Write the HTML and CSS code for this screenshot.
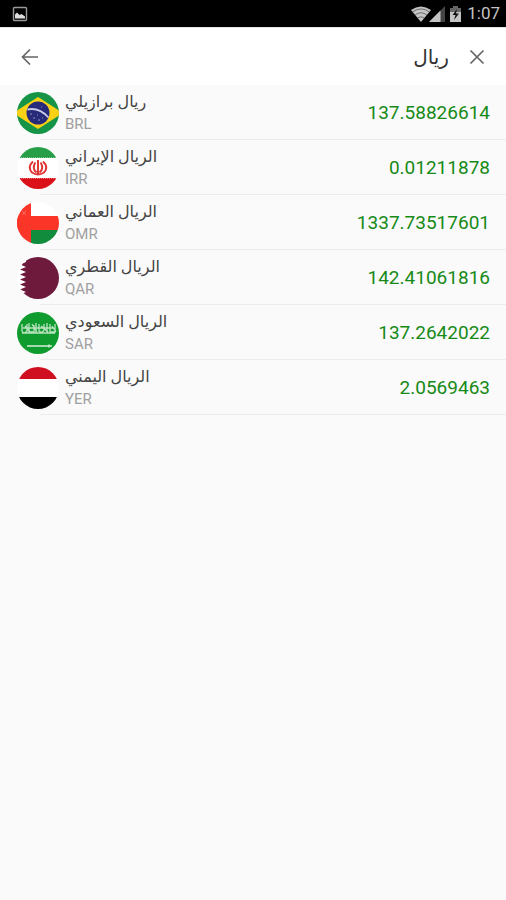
FILE: index.html
```
<!DOCTYPE html>
<html lang="ar">
  <head>
    <meta charset="UTF-8" />
    <meta name="viewport" content="width=device-width, initial-scale=1.0" />
    <title>ريال</title>
    <link rel="stylesheet" href="styles.css">
  </head>
  <body>
    <div class="status-bar">
      <svg class="picture-icon" width="16" height="16" viewBox="0 0 16 16">
        <rect x="1.5" y="1.5" width="13" height="13" rx="1" fill="none" stroke="#999" stroke-width="1.4" />
        <path d="M3 12.5V8.5L5 6.5L7.5 9L9.5 8L13 10.5V12.5Z" fill="#ddd" />
      </svg>
      <div class="status-right">
        <svg width="51" height="18" viewBox="0 0 51 18">
          <path d="M0 5Q10 -2 20 5L10 17Z" fill="#c4c4c4" />
          <path d="M1.5 7Q10 .8 18.5 7M4 10Q10 5.500 16 10M6.500 13Q10 10.500 13.500 13" fill="none" stroke="#555" stroke-width=".8" />
          <path d="M34 1V17H18Z" fill="#444" />
          <path d="M29.500 5.500V17H18Z" fill="#c4c4c4" />
          <path d="M42 1H47V3H50V17H39V3H42Z" fill="#666" />
          <path d="M39 7H50V17H39Z" fill="#c4c4c4" />
          <path d="M46 4L41.500 10H44.500L43 15L48 8.500H45Z" fill="#111" />
        </svg>
        <span class="clock">1:07</span>
      </div>
    </div>

    <header class="search-bar">
      <button class="icon-btn" type="button" aria-label="رجوع">
        <svg width="18" height="18" viewBox="0 0 18 18">
          <path d="M17 9H2M9 1.500L1.500 9L9 16.500" />
        </svg>
      </button>
      <input class="search-input" type="text" dir="rtl" value="ريال" aria-label="بحث" />
      <button class="icon-btn" type="button" aria-label="مسح">
        <svg width="16" height="16" viewBox="0 0 16 16">
          <path d="M1.500 1.500L14.500 14.500M14.500 1.500L1.500 14.500" />
        </svg>
      </button>
    </header>

    <ul class="currency-list">
      <li>
        <svg class="flag" viewBox="0 0 42 42">
          <rect width="42" height="42" fill="#159447" />
          <path d="M21 5L46 21L21 37L-4 21Z" fill="#fbd116" />
          <circle cx="21" cy="21" r="11.500" fill="#262a78" />
          <path d="M10.500 17.500Q22 15 31.500 25.500" fill="none" stroke="#c9cbea" stroke-width="1.800" />
          <path d="M13 22H15M16 26H18M20 23H21M21 28H23M25 26H26M24 15H25" stroke="#8d90c5" />
        </svg>
        <div class="name"><span dir="rtl">ريال برازيلي</span><small>BRL</small></div>
        <span class="rate">137.58826614</span>
      </li>
      <li>
        <svg class="flag" viewBox="0 0 42 42">
          <rect width="42" height="42" fill="#fff" />
          <rect width="42" height="11" fill="#269f48" />
          <rect y="31" width="42" height="11" fill="#da1119" />
          <path d="M0 10.500H42M0 31.500H42" stroke="#fff" stroke-dasharray="1 1" opacity=".4" />
          <path d="M21 13V28M16 14.500Q10 20 15 25.500Q18 27.500 21 27.500Q24 27.500 27 25.500Q32 20 26 14.500M18.500 15.500Q14.500 21 19.500 25.500M23.500 15.500Q27.500 21 22.500 25.500" fill="none" stroke="#e03030" stroke-width="1.900" />
        </svg>
        <div class="name"><span dir="rtl">الريال الإيراني</span><small>IRR</small></div>
        <span class="rate">0.01211878</span>
      </li>
      <li>
        <svg class="flag" viewBox="0 0 42 42">
          <rect width="42" height="42" fill="#fff" />
          <rect width="14" height="42" fill="#fb3527" />
          <rect y="14" width="42" height="14" fill="#fb3527" />
          <rect x="14" y="28" width="28" height="14" fill="#118b3c" />
          <path d="M5 9L9 13M9 9L5 13" stroke="#fd6b60" />
        </svg>
        <div class="name"><span dir="rtl">الريال العماني</span><small>OMR</small></div>
        <span class="rate">1337.73517601</span>
      </li>
      <li>
        <svg class="flag" viewBox="0 0 42 42">
          <rect width="42" height="42" fill="#fff" />
          <path d="M42 0H9V5L3 7.500L9 10L3 12.500L9 15L3 17.500L9 20L3 22.500L9 25L3 27.500L9 30L3 32.500L9 35L3 37.500L9 40V42H42Z" fill="#6e1a3d" />
        </svg>
        <div class="name"><span dir="rtl">الريال القطري</span><small>QAR</small></div>
        <span class="rate">142.41061816</span>
      </li>
      <li>
        <svg class="flag" viewBox="0 0 42 42">
          <rect width="42" height="42" fill="#0f9b2d" />
          <path d="M5 12V19Q7 23 10 19V12M8 14L14 21M12 11V20H17V13M15 12L20 20M19 11V21M22 12V19Q25 22 27 18V12M24 14L31 20M30 11V20M33 12V20H38V12M35 14L39 20M5 21H38M6 16H37" fill="none" stroke="#b9e3c0" stroke-width="1.300" />
          <path d="M10 34H35M32 32.500V35.500" stroke="#d5eed9" stroke-width="1.400" />
        </svg>
        <div class="name"><span dir="rtl">الريال السعودي</span><small>SAR</small></div>
        <span class="rate">137.2642022</span>
      </li>
      <li>
        <svg class="flag" viewBox="0 0 42 42">
          <rect width="42" height="42" fill="#fff" />
          <rect width="42" height="12" fill="#d00f21" />
          <rect y="30" width="42" height="12" fill="#000" />
        </svg>
        <div class="name"><span dir="rtl">الريال اليمني</span><small>YER</small></div>
        <span class="rate">2.0569463</span>
      </li>
    </ul>
  </body>
</html>
```
FILE: styles.css
```
* {
  margin: 0;
  padding: 0;
  box-sizing: border-box;
}

body {
  min-height: 100vh;
  background: #fafafa;
  font-family: Roboto, "DejaVu Sans", sans-serif;
}

.status-bar {
  display: flex;
  align-items: center;
  justify-content: space-between;
  height: 27px;
  padding: 0 6px 0 12px;
  background: #000;
}

.status-right {
  display: flex;
  align-items: center;
  gap: 5px;
}

.clock {
  color: #c4c4c4;
  font-size: 17px;
  line-height: 27px;
}

.search-bar {
  display: flex;
  align-items: center;
  height: 58px;
  padding: 0 11px 0 12px;
  background: #fff;
  border-top: 1px solid #e6e6e6;
}

.icon-btn {
  display: flex;
  align-items: center;
  justify-content: center;
  width: 36px;
  height: 36px;
  border: none;
  background: transparent;
  cursor: pointer;
}

.icon-btn svg {
  fill: none;
  stroke: #666;
  stroke-width: 1.7;
}

.search-input {
  flex: 1;
  min-width: 0;
  padding: 0 10px;
  border: none;
  outline: none;
  background: transparent;
  color: #333;
  font-family: Roboto, "DejaVu Sans", sans-serif;
  font-size: 20px;
}

.currency-list {
  list-style: none;
}

/* divider starts under the middle of the flag */
.currency-list li {
  display: flex;
  align-items: center;
  height: 55px;
  padding: 0 16px 0 17px;
  background: linear-gradient(#ececec, #ececec) 40px 100% / 100% 1px no-repeat;
}

.flag {
  width: 42px;
  height: 42px;
  border-radius: 50%;
}

.name {
  display: flex;
  flex: 1;
  flex-direction: column;
  align-items: flex-start;
  padding-left: 6px;
}

.name span {
  color: #444;
  font-size: 16px;
  line-height: 23px;
}

.name small {
  color: #a0a0a0;
  font-size: 15px;
  line-height: 22px;
}

.rate {
  color: #168a16;
  font-size: 19px;
}
```
